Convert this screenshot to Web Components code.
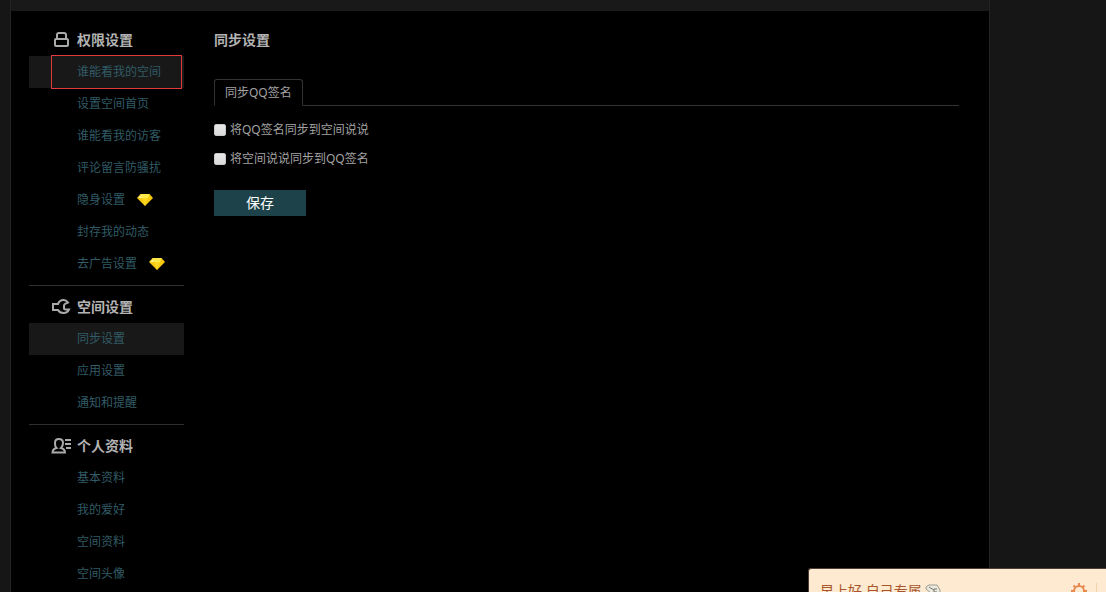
<!DOCTYPE html>
<html lang="zh-CN">
<head>
<meta charset="utf-8">
<title>空间设置</title>
<style>
  html, body { margin: 0; height: 100%; overflow: hidden; background: #161616; }
  body { font: 12px/18px "Noto Sans", "Noto Sans CJK SC", sans-serif; color: #a3a3a3; }
</style>
</head>
<body>
<settings-page>
  <side-nav slot="nav">
    <nav-group heading="权限设置" icon="lock">
      <nav-item active marked>谁能看我的空间</nav-item>
      <nav-item>设置空间首页</nav-item>
      <nav-item>谁能看我的访客</nav-item>
      <nav-item>评论留言防骚扰</nav-item>
      <nav-item diamond>隐身设置</nav-item>
      <nav-item>封存我的动态</nav-item>
      <nav-item diamond>去广告设置</nav-item>
    </nav-group>
    <nav-group heading="空间设置" icon="wrench">
      <nav-item active>同步设置</nav-item>
      <nav-item>应用设置</nav-item>
      <nav-item>通知和提醒</nav-item>
    </nav-group>
    <nav-group heading="个人资料" icon="profile">
      <nav-item>基本资料</nav-item>
      <nav-item>我的爱好</nav-item>
      <nav-item>空间资料</nav-item>
      <nav-item>空间头像</nav-item>
    </nav-group>
  </side-nav>
  <sync-form></sync-form>
</settings-page>
<greeting-popup>早上好,自己专属</greeting-popup>

<script>
const define = (name, html, setup) => customElements.define(name, class extends HTMLElement {
  constructor() {
    super();
    this.attachShadow({ mode: 'open' }).innerHTML = html;
  }
  connectedCallback() { if (setup) setup(this, this.shadowRoot); }
});

const icons = {
  lock: '<path d="M6 9V5q0-2 2-2h5q2 0 2 2v4"/><rect x="4" y="9" width="13" height="7" rx="1"/>',
  wrench: '<path d="M2 7H7C8 4.300 10 3 12.500 3q2.700 0 4.500 2.500l-2.500 1.200q-1.500.8-1.500 1.800v3q0 1 1.500 1H18q-1.500 3.500-5.500 3.500C10 16 8 15 7 13H2z"/>',
  profile: '<path d="M1.500 16.500c.2-2.500 1.500-4 4-4.500C3.800 10.500 4 8.500 4 7c0-3 1.500-4 3.800-4S12 4 12 7c0 1.500-.3 3.500-2 5 2.500.5 3.800 2 4 4.500z"/><path d="M14 4H20M14 8H20M15 12H20"/>'
};

define('nav-item', `
  <style>
    :host { display: block; }
    a { position: relative; display: flex; align-items: center; height: 32px; padding-left: 48px; color: #315b66; text-decoration: none; }
    :host([active]) a { background: #181818; }
    .mark, svg { display: none; }
    :host([marked]) .mark { display: block; position: absolute; inset: -1px 2px -1px 22px; border: 1px solid #e03a3c; }
    :host([diamond]) svg { display: block; margin-left: 12px; }
  </style>
  <a href="#"><slot></slot><svg width="16" height="12" viewBox="0 0 16 12" aria-hidden="true">
    <path d="M3.500 0h9L16 4 8 12 0 4z" fill="#f6c80e"/><path d="M3.500 0h9L11 4H5z" fill="#ffe94a"/><path d="M5 4h6l-3 8z" fill="#fbd622"/><path d="M1 4l3-3 1 3z" fill="#fff09a"/>
  </svg><span class="mark"></span></a>`);

define('nav-group', `
  <style>
    :host { display: block; padding-bottom: 5px; margin-bottom: 5px; border-bottom: 1px solid #303030; }
    :host(:last-of-type) { border-bottom: 0; }
    h2 { display: flex; align-items: center; gap: 4px; height: 32px; margin: 0; padding-left: 22px; font-size: 14px; line-height: 20px; color: #b3b3b3; }
    svg { fill: none; stroke: #aaa; stroke-width: 2; }
  </style>
  <h2><svg width="22" height="20" viewBox="0 0 22 20" aria-hidden="true"></svg><span></span></h2>
  <slot></slot>`,
  (host, root) => {
    root.querySelector('svg').innerHTML = icons[host.getAttribute('icon')];
    root.querySelector('span').textContent = host.getAttribute('heading');
  });

define('side-nav', `
  <style>:host { display: block; } nav { width: 155px; }</style>
  <nav><slot></slot></nav>`);

define('sync-form', `
  <style>
    :host { display: block; }
    h1 { display: flex; align-items: center; height: 32px; margin: 0 0 23px; font-size: 14px; line-height: 20px; color: #b3b3b3; }
    .tabs { display: flex; border-bottom: 1px solid #333; margin-bottom: 15px; }
    .tab { box-sizing: border-box; height: 27px; margin-bottom: -1px; padding: 0 10px; border: 1px solid #333; border-bottom-color: #000; border-radius: 3px 3px 0 0; background: #000; color: inherit; font: inherit; }
    label { display: flex; align-items: center; gap: 4px; height: 18px; line-height: 20px; margin-bottom: 11px; }
    input { appearance: none; width: 12px; height: 12px; margin: 0; border: 1px solid #c8c8c8; border-radius: 2px; background: linear-gradient(#e8e8e8, #dadada); }
    .save { width: 92px; height: 26px; margin-top: 11px; padding: 0; border: 0; background: #1e4249; color: #fff; font-family: inherit; font-size: 14px; line-height: 26px; }
  </style>
  <h1>同步设置</h1>
  <div class="tabs"><button class="tab" type="button">同步QQ签名</button></div>
  <form>
    <label><input type="checkbox">将QQ签名同步到空间说说</label>
    <label><input type="checkbox">将空间说说同步到QQ签名</label>
    <button class="save" type="button">保存</button>
  </form>`);

define('settings-page', `
  <style>
    :host { display: block; min-height: 100%; padding: 0 116px 0 10px; }
    .frame { min-height: 100vh; border: solid #242424; border-width: 0 1px; background: #000; }
    header { height: 11px; background: #191919; }
    .body { display: flex; gap: 30px; padding: 13px 30px 0 18px; }
    main { flex: 1; }
  </style>
  <div class="frame">
    <header></header>
    <div class="body"><slot name="nav"></slot><main><slot></slot></main></div>
  </div>`);

define('greeting-popup', `
  <style>
    :host { position: fixed; right: 0; bottom: -16px; width: 298px; box-sizing: border-box; height: 40px; display: flex; align-items: center; gap: 3px; padding: 4px 9px 0 11px; border: solid #4a4038; border-width: 1px 0 0 1px; border-radius: 3px 0 0 0; background: #fee9d1; color: #a8552b; font-size: 14px; line-height: 20px; }
    .gear { margin-left: auto; }
    .rule { width: 1px; height: 16px; margin-left: 6px; background: #f3d3ad; }
    svg { flex: none; }
  </style>
  <slot></slot>
  <svg width="16" height="16" viewBox="0 0 16 16" fill="#eee9de" stroke="#9b9b90" aria-hidden="true"><path d="M1 4l3-2h8l3 5v7h-5L6 10 1 6z"/><path d="M4 4l5 3M12 6H9v3h3v3H8" fill="none" stroke="#74776f"/></svg>
  <svg class="gear" width="16" height="16" viewBox="0 0 16 16" fill="none" stroke="#e88a50" stroke-width="2" aria-hidden="true"><circle cx="8" cy="8" r="5"/><path d="M8 0v3M8 13v3M0 8h3M13 8h3M2.500 2.500l2 2M11.500 11.500l2 2M2.500 13.500l2-2M11.500 4.500l2-2"/></svg>
  <span class="rule"></span>`);
</script>
</body>
</html>
